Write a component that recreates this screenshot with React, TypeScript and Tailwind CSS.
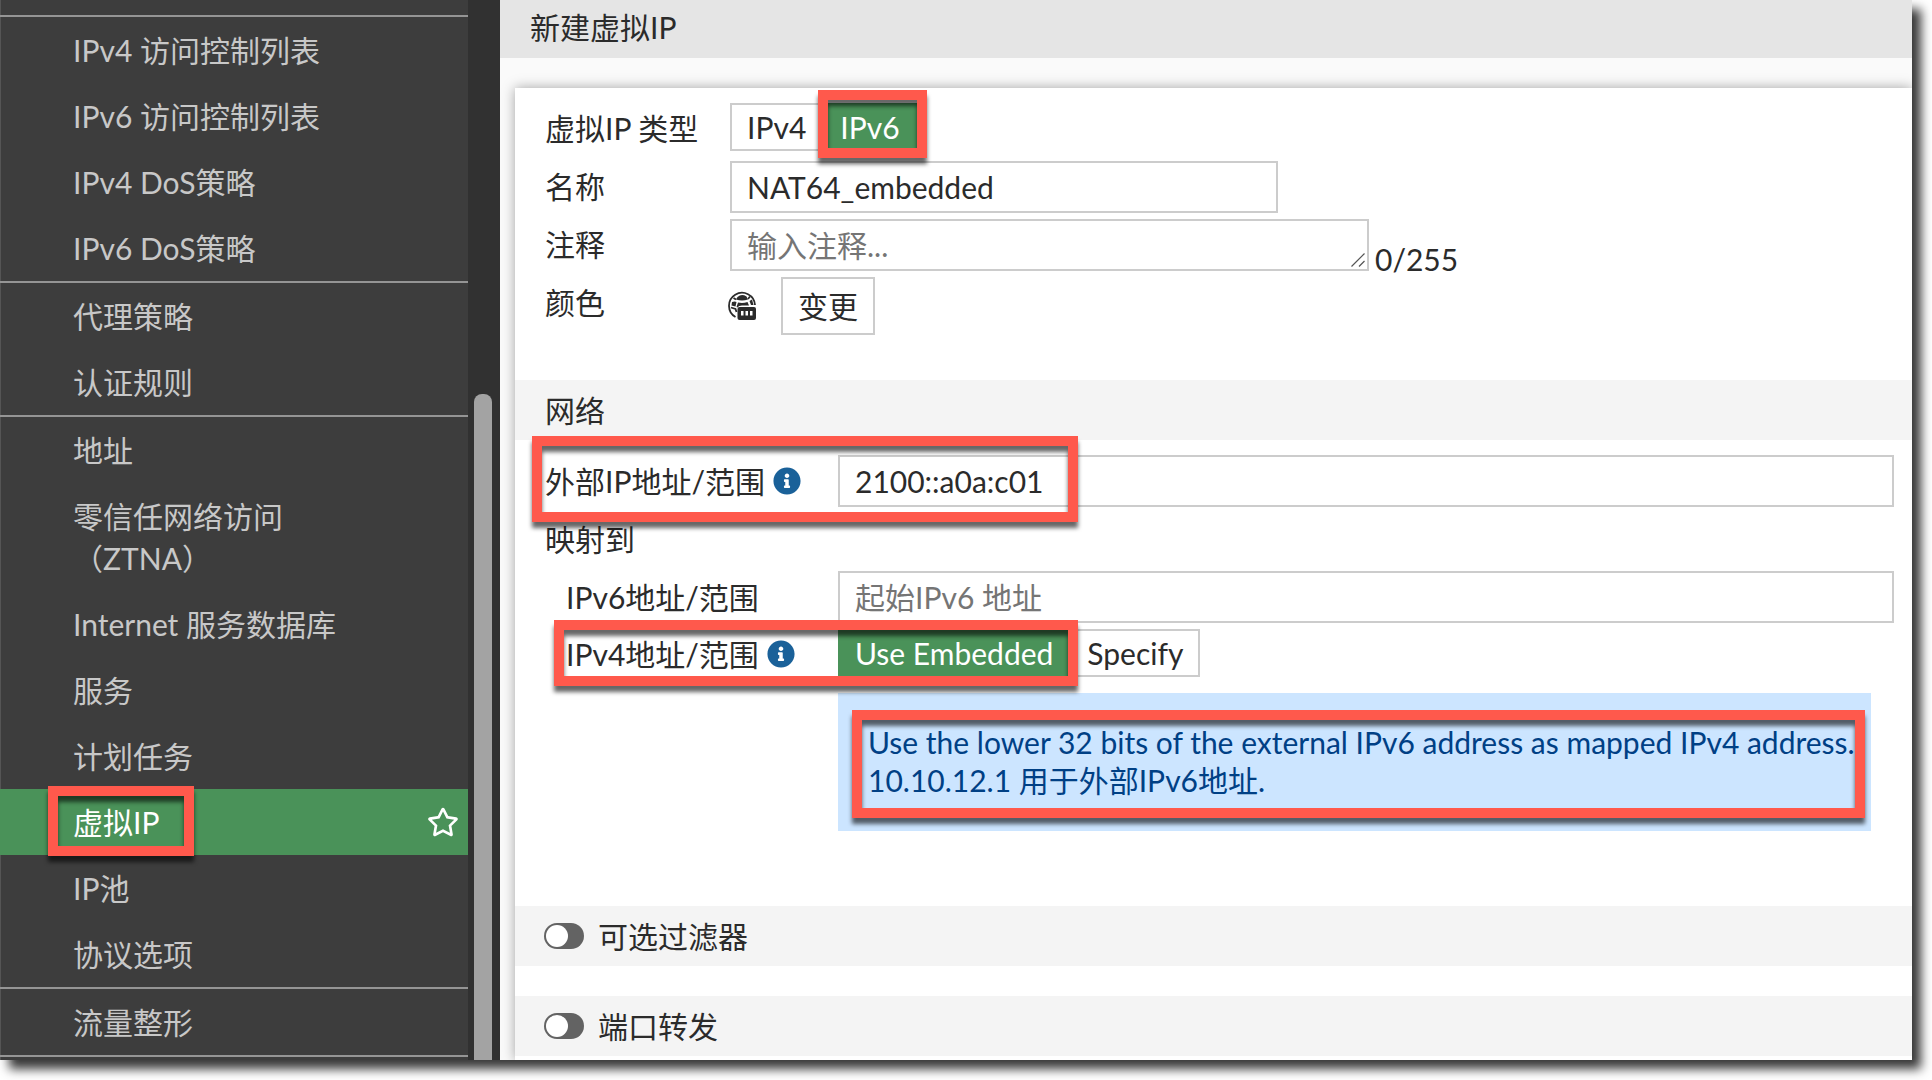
import { useState, type ReactNode } from "react";
import clsx from "clsx";
import { FaInfoCircle, FaRegStar } from "react-icons/fa";

const NAV_GROUPS: string[][] = [
  ["IPv4 访问控制列表", "IPv6 访问控制列表", "IPv4 DoS策略", "IPv6 DoS策略"],
  ["代理策略", "认证规则"],
  [
    "地址",
    "零信任网络访问（ZTNA）",
    "Internet 服务数据库",
    "服务",
    "计划任务",
    "虚拟IP",
    "IP池",
    "协议选项",
  ],
  ["流量整形"],
];

const ACTIVE = "虚拟IP";

// Red call-out frame laid over the thing it points at
function Callout({ className }: { className: string }) {
  return (
    <span
      aria-hidden="true"
      className={clsx(
        "pointer-events-none absolute z-10 border-10 border-[#ff594c] drop-shadow-[0_6px_2px_rgba(0,0,0,0.6)]",
        className
      )}
    />
  );
}

function NavItem({ label }: { label: string }) {
  const active = label === ACTIVE;
  return (
    <a
      href="#"
      aria-current={active ? "page" : undefined}
      className={clsx(
        "relative flex items-center justify-between py-3 pr-[9px] pl-[73px] leading-[42px]",
        active ? "bg-[#4a9259] text-white" : "text-[#c8c8c8]"
      )}
    >
      <span className="max-w-[280px]">{label}</span>
      {active && <FaRegStar className="h-[30px] w-8" />}
      {active && <Callout className="-top-[3px] -bottom-px left-12 w-[146px]" />}
    </a>
  );
}

function Sidebar() {
  return (
    <aside className="flex w-[500px] shrink-0 overflow-hidden bg-[#313131]">
      <nav className="w-[468px] border-l border-[#555] bg-[#3d3d3d] pt-[15px]">
        {NAV_GROUPS.map((group) => (
          <div key={group[0]} className="-ml-px border-t-2 border-[#959595]">
            {group.map((label) => (
              <NavItem key={label} label={label} />
            ))}
          </div>
        ))}
        <div className="-ml-px border-t-2 border-[#959595]" />
      </nav>
      <div className="flex flex-1 flex-col pr-2 pl-[6px]">
        <div className="mt-[394px] flex-1 rounded-t-lg bg-[#a3a3a3]" />
      </div>
    </aside>
  );
}

function Segment({
  name,
  label,
  checked,
  onSelect,
  children,
}: {
  name: string;
  label: string;
  checked: boolean;
  onSelect: () => void;
  children?: ReactNode;
}) {
  return (
    <label
      className={clsx(
        "relative h-12 border-2 px-[15px] leading-[45px]",
        checked
          ? "border-[#4a9259] bg-[#4a9259] text-white"
          : "border-[#ccc] bg-white"
      )}
    >
      <input
        type="radio"
        name={name}
        checked={checked}
        onChange={onSelect}
        className="sr-only"
      />
      {label}
      {children}
    </label>
  );
}

function SectionToggle({ id, label }: { id: string; label: string }) {
  return (
    <div className="flex h-15 items-center gap-[14px] bg-[#f4f4f4] px-[29px]">
      <input
        id={id}
        type="checkbox"
        role="switch"
        className="relative h-[26px] w-10 appearance-none rounded-full bg-[#636363] before:absolute before:top-[2px] before:left-[2px] before:size-[22px] before:rounded-full before:bg-white checked:bg-[#4a9259] checked:before:left-4"
      />
      <label htmlFor={id}>{label}</label>
    </div>
  );
}

function VipIcon() {
  return (
    <svg viewBox="0 0 30 30" className="size-[30px]" aria-hidden="true">
      <g fill="none" stroke="#2b2b2b">
        <path strokeWidth="1.8" d="M28 14A13 13 0 1 0 8.500 26" />
        <path strokeWidth="0" fill="#2b2b2b" d="M10.500 6Q14.500 2.500 19.500 5.500L21 8.500Q15 10.500 9 8.500Z" />
        <path strokeWidth="0" fill="#2b2b2b" d="M5 11Q8 10 9.500 11L8.500 15.500L4.500 14.500ZM11 11.500Q16 12.500 20.500 11L22 14.500H15Q11.500 14.500 10.500 16.500L9.500 16ZM22.500 10L25 8.500L26.500 14H24Z" />
        <path strokeWidth="1.800" d="M4 16.500L8.500 18L9.500 21M6.500 7L9 8.500M23 5.500L21 8" />
      </g>
      <rect x="10.500" y="16" width="18.500" height="13" rx="2" fill="#2b2b2b" />
      <path fill="#fff" d="M14 20h2.500v4.500H14zM18.500 20H21v4.500h-2.500zM23 20h2.500v4.500H23z" />
    </svg>
  );
}

const FIELD =
  "h-[52px] border-2 border-[#ccc] bg-white px-[15px] outline-none placeholder:text-[#757575] placeholder:opacity-100";

export default function App() {
  const [vipType, setVipType] = useState("IPv6");
  const [mapping, setMapping] = useState("Use Embedded");
  const [name, setName] = useState("NAT64_embedded");
  const [comment, setComment] = useState("");
  const [externalIp, setExternalIp] = useState("2100::a0a:c01");

  return (
    <div className="h-screen overflow-hidden bg-white pr-5 pb-5 font-[Lato,'Noto_Sans_CJK_SC',sans-serif] text-[30px] text-[#2b2b2b]">
      <div className="flex h-full bg-[#fafafa] shadow-[9px_9px_10px_rgba(0,0,0,0.78)]">
        <Sidebar />
        <main className="flex min-w-0 flex-1 flex-col overflow-hidden">
          <h1 className="h-[58px] shrink-0 bg-[#e5e5e5] px-[30px] leading-[54px]">
            新建虚拟IP
          </h1>
          <form className="mt-[30px] ml-[15px] flex-1 bg-white pt-[15px] leading-[52px] shadow-[0_0_12px_rgba(0,0,0,0.35)]">
            <div className="flex flex-col gap-[6px] px-[30px] pb-[45px] leading-[50px]">
              <div role="radiogroup" aria-labelledby="vip-type" className="flex h-[52px]">
                <span id="vip-type" className="w-[185px]">
                  虚拟IP 类型
                </span>
                {["IPv4", "IPv6"].map((t) => (
                  <Segment
                    key={t}
                    name="vip-type"
                    label={t}
                    checked={vipType === t}
                    onSelect={() => setVipType(t)}
                  >
                    {t === "IPv6" && (
                      <Callout className="-top-[15px] -right-[12px] -bottom-[9px] -left-[7px]" />
                    )}
                  </Segment>
                ))}
              </div>
              <div className="flex">
                <label htmlFor="name" className="w-[185px]">
                  名称
                </label>
                <input
                  id="name"
                  value={name}
                  onChange={(e) => setName(e.target.value)}
                  className={clsx(FIELD, "w-[548px]")}
                />
              </div>
              <div className="flex">
                <label htmlFor="comment" className="w-[185px]">
                  注释
                </label>
                <div className="relative flex">
                  <textarea
                    id="comment"
                    placeholder="输入注释..."
                    maxLength={255}
                    value={comment}
                    onChange={(e) => setComment(e.target.value)}
                    className={clsx(FIELD, "w-[639px] resize-none overflow-hidden leading-[48px]")}
                  />
                  <svg
                    viewBox="0 0 14 14"
                    className="absolute right-1 bottom-1 size-[14px]"
                    aria-hidden="true"
                  >
                    <path d="M0.500 13.500L13.500 0.500M8 13.500L13.500 8" stroke="#555" strokeWidth="1.200" />
                  </svg>
                </div>
                <span className="ml-[6px] self-end leading-[24px]">
                  {comment.length}/255
                </span>
              </div>
              <div className="flex">
                <span className="w-[182px]">颜色</span>
                <div className="flex items-center gap-6">
                  <VipIcon />
                  <button
                    type="button"
                    className="h-[58px] border-2 border-[#ccc] bg-white px-[15px] leading-[54px]"
                  >
                    变更
                  </button>
                </div>
              </div>
            </div>

            <h2 className="h-15 bg-[#f4f4f4] px-[30px] leading-[60px]">网络</h2>
            <div className="flex flex-col gap-[6px] pt-[15px] pr-[18px] pb-[75px] pl-[30px]">
              <div className="relative flex">
                <label htmlFor="external-ip" className="flex w-[293px] items-center gap-2">
                  外部IP地址/范围
                  <FaInfoCircle className="size-7 text-[#1a6199]" />
                </label>
                <input
                  id="external-ip"
                  value={externalIp}
                  onChange={(e) => setExternalIp(e.target.value)}
                  className={clsx(FIELD, "min-w-0 flex-1")}
                />
                <Callout className="-top-[19px] -bottom-[15px] -left-[13px] w-[546px]" />
              </div>
              <p>映射到</p>
              <div className="flex">
                <label htmlFor="mapped-ipv6" className="w-[293px] pl-[21px]">
                  IPv6地址/范围
                </label>
                <input
                  id="mapped-ipv6"
                  placeholder="起始IPv6 地址"
                  className={clsx(FIELD, "min-w-0 flex-1")}
                />
              </div>
              <div
                role="radiogroup"
                aria-labelledby="mapped-ipv4"
                className="relative flex h-12"
              >
                <span
                  id="mapped-ipv4"
                  className="flex h-[50px] w-[293px] items-center gap-2 pl-[21px]"
                >
                  IPv4地址/范围
                  <FaInfoCircle className="size-7 text-[#1a6199]" />
                </span>
                {["Use Embedded", "Specify"].map((m) => (
                  <Segment
                    key={m}
                    name="mapping"
                    label={m}
                    checked={mapping === m}
                    onSelect={() => setMapping(m)}
                  />
                ))}
                <Callout className="-top-[9px] -bottom-[9px] left-[9px] w-[524px]" />
              </div>
              <div className="relative mt-[10px] ml-[293px] w-fit bg-[#cce5ff] pt-[30px] pr-4 pb-8 pl-[30px] leading-[38px] text-[#004085]">
                <p>Use the lower 32 bits of the external IPv6 address as mapped IPv4 address.</p>
                <p>10.10.12.1 用于外部IPv6地址.</p>
                <Callout className="top-[17px] right-[6px] bottom-[13px] left-[14px]" />
              </div>
            </div>

            <div className="flex flex-col gap-[30px]">
              <SectionToggle id="filters" label="可选过滤器" />
              <SectionToggle id="port-forward" label="端口转发" />
            </div>
          </form>
        </main>
      </div>
    </div>
  );
}
